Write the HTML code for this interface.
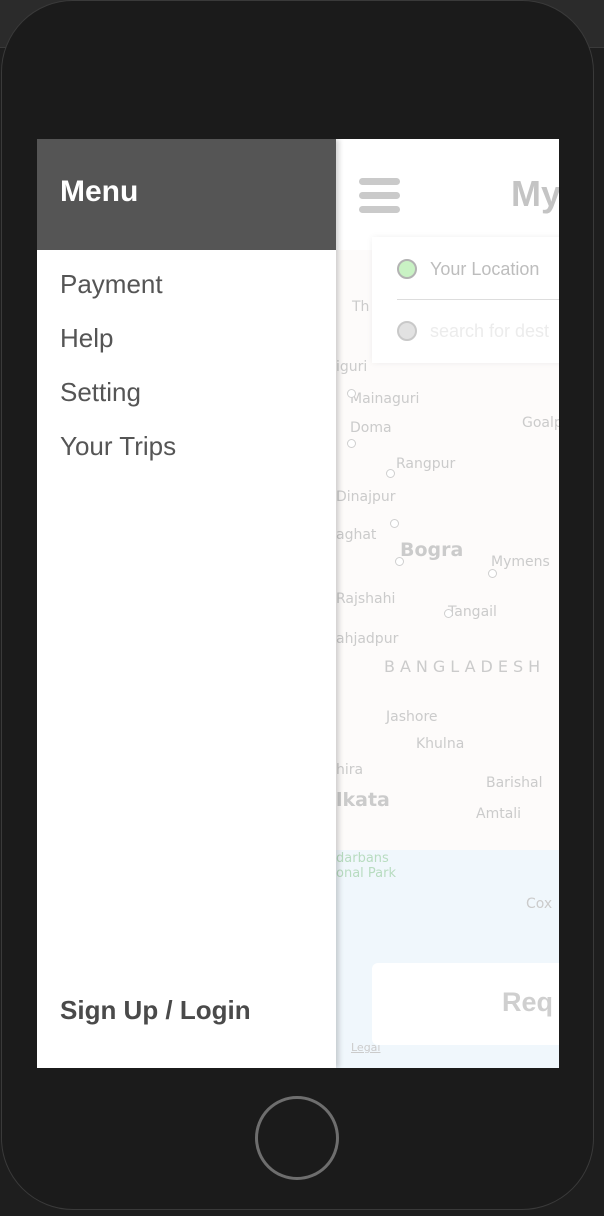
<!DOCTYPE html>
<html><head><meta charset="utf-8"><style>
*{margin:0;padding:0;box-sizing:border-box}
body{width:604px;height:1216px;background:#232323;position:relative;overflow:hidden;font-family:"Liberation Sans",sans-serif}
.bg{position:absolute;left:0;top:0;width:604px;height:1216px;background:#1e1e1e}
.bg .bar{position:absolute;left:0;top:0;width:604px;height:48px;background:#2b2b2b;border-bottom:1px solid #3a3a3a}
.phone{position:absolute;left:1px;top:0;width:593px;height:1210px;background:#1b1b1b;border-radius:72px;border:1px solid #3a3a3a}
.screen{position:absolute;left:37px;top:139px;width:522px;height:929px;background:#fbf8f6;overflow:hidden}
.map{position:absolute;left:299px;top:0;width:223px;height:929px;background:#fdfbfa}
.water{position:absolute;left:0;top:711px;width:223px;height:218px;background:#f0f7fc}
.lbl{position:absolute;color:#cbcbcb;font-size:14px;font-family:"DejaVu Sans",sans-serif;white-space:nowrap}
.dot{position:absolute;width:9px;height:9px;border:1.5px solid #cfcfcf;border-radius:50%;background:#fff}
.topbar{position:absolute;left:299px;top:0;width:223px;height:111px;background:#fff}
.ham{position:absolute;left:23px;width:41px;height:7px;border-radius:4px;background:#cacaca}
.card{position:absolute;left:335px;top:98px;width:200px;height:126px;background:#fff;box-shadow:0 0 6px rgba(0,0,0,.06)}
.menu{position:absolute;left:0;top:0;width:299px;height:929px;background:#fff;box-shadow:3px 0 5px rgba(0,0,0,.18)}
.mh{height:111px;background:#555;color:#fff;font-weight:bold;font-size:30px;padding:36px 0 0 23px}
.mi{font-size:26px;color:#555;position:absolute;left:23px}
.btn{position:absolute;left:335px;top:824px;width:200px;height:82px;background:#fff;border-radius:6px}
</style></head><body>
<div class="bg"><div class="bar"></div></div>
<div class="phone"></div>
<div style="position:absolute;left:255px;top:1096px;width:84px;height:84px;border:3px solid #6e6e6e;border-radius:50%"></div>
<div class="screen">
 <div class="map">
  <div class="water"></div>
  <div class="lbl" style="left:16px;top:160px">Th</div>
  <div class="lbl" style="left:0;top:220px">iguri</div>
  <div class="lbl" style="left:14px;top:252px">Mainaguri</div>
  <div class="lbl" style="left:14px;top:281px">Doma</div>
  <div class="lbl" style="left:186px;top:276px">Goalpa</div>
  <div class="lbl" style="left:60px;top:317px">Rangpur</div>
  <div class="lbl" style="left:0;top:350px">Dinajpur</div>
  <div class="lbl" style="left:0;top:388px">aghat</div>
  <div class="lbl" style="left:64px;top:400px;font-size:19px;font-weight:bold">Bogra</div>
  <div class="lbl" style="left:155px;top:415px">Mymens</div>
  <div class="lbl" style="left:0;top:452px">Rajshahi</div>
  <div class="lbl" style="left:112px;top:465px">Tangail</div>
  <div class="lbl" style="left:0;top:492px">ahjadpur</div>
  <div class="lbl" style="left:48px;top:518px;letter-spacing:5px;font-size:16px">BANGLADESH</div>
  <div class="lbl" style="left:50px;top:570px">Jashore</div>
  <div class="lbl" style="left:80px;top:597px">Khulna</div>
  <div class="lbl" style="left:0;top:623px">hira</div>
  <div class="lbl" style="left:150px;top:636px">Barishal</div>
  <div class="lbl" style="left:0;top:650px;font-size:19px;font-weight:bold">lkata</div>
  <div class="lbl" style="left:140px;top:667px">Amtali</div>
  <div class="lbl" style="left:0;top:712px;color:#b8dcc0;font-size:13px">darbans<br>onal Park</div>
  <div class="lbl" style="left:190px;top:757px">Cox</div>
  <div class="lbl" style="left:15px;top:902px;font-size:11px;text-decoration:underline">Legal</div>
  <div class="dot" style="left:11px;top:250px"></div>
  <div class="dot" style="left:11px;top:300px"></div>
  <div class="dot" style="left:189px;top:188px"></div>
  <div class="dot" style="left:50px;top:330px"></div>
  <div class="dot" style="left:54px;top:380px"></div>
  <div class="dot" style="left:152px;top:430px"></div>
  <div class="dot" style="left:108px;top:470px"></div>
  <div class="dot" style="left:59px;top:418px"></div>
 </div>
 <div class="topbar">
  <div class="ham" style="top:39px"></div>
  <div class="ham" style="top:53px"></div>
  <div class="ham" style="top:67px"></div>
  <div style="position:absolute;left:175px;top:34px;font-size:36px;font-weight:bold;color:#c4c4c4">My</div>
 </div>
 <div class="card">
  <div style="position:absolute;left:25px;top:22px;width:20px;height:20px;border-radius:50%;background:#c9f2c4;border:2px solid #b3b3b3"></div>
  <div style="position:absolute;left:58px;top:22px;font-size:18px;color:#bdbdbd">Your Location</div>
  <div style="position:absolute;left:25px;top:62px;width:175px;height:1px;background:#ddd"></div>
  <div style="position:absolute;left:25px;top:84px;width:20px;height:20px;border-radius:50%;background:#e2e2e2;border:2px solid #c9c9c9"></div>
  <div style="position:absolute;left:58px;top:84px;font-size:18px;color:#ececec">search for dest</div>
 </div>
 <div class="btn"><div style="position:absolute;left:130px;top:24px;font-size:27px;font-weight:bold;color:#cfcfcf">Req</div></div>
 <div class="menu">
  <div class="mh">Menu</div>
  <div class="mi" style="top:130px">Payment</div>
  <div class="mi" style="top:184px">Help</div>
  <div class="mi" style="top:238px">Setting</div>
  <div class="mi" style="top:292px">Your Trips</div>
  <div class="mi" style="top:856px;font-weight:bold;color:#4a4a4a">Sign Up / Login</div>
 </div>
</div>
</body></html>
